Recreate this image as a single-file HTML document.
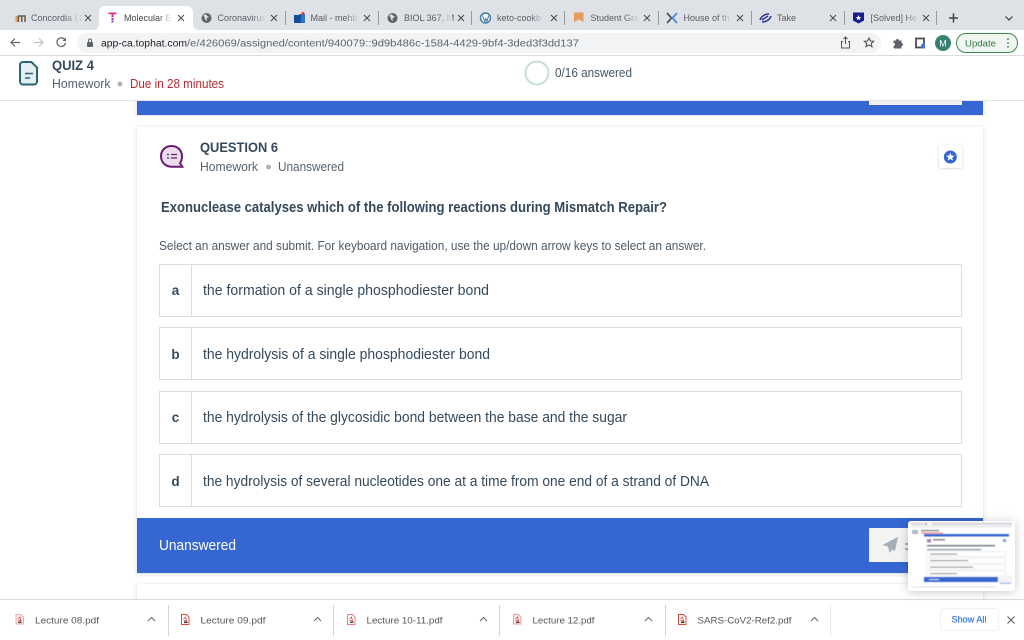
<!DOCTYPE html>
<html><head><meta charset="utf-8"><style>
html,body{margin:0;padding:0;width:1024px;height:640px;overflow:hidden;background:#fff}
svg{display:block;filter:blur(.35px)}
text{font-family:"Liberation Sans",sans-serif}
.tab{font-size:9px;fill:#5a5d63}
.t{fill:#34495b}
.x{stroke:#45484c;stroke-width:1;fill:none}
.sep{stroke:#96999d;stroke-width:1}
.dl{font-size:9.5px;fill:#555}
.ch{stroke:#666;stroke-width:1;fill:none}
.opt{fill:#fff;stroke:#d9dee3;stroke-width:1}
.pdf{fill:#fff;stroke:#e0483e;stroke-width:1}
</style></head><body>
<svg width="1024" height="640" viewBox="0 0 1024 640" xmlns="http://www.w3.org/2000/svg">
<defs>
<filter id="sh" x="-5%" y="-5%" width="110%" height="110%"><feDropShadow dx="0" dy="1" stdDeviation="2.500" flood-color="#000" flood-opacity=".16"/></filter>
<filter id="sh2" x="-20%" y="-20%" width="140%" height="140%"><feDropShadow dx="0" dy="1" stdDeviation="5" flood-color="#000" flood-opacity=".22"/></filter>
<filter id="bl" x="-2%" y="-2%" width="104%" height="104%"><feGaussianBlur stdDeviation=".6"/></filter>
<linearGradient id="fade"><stop offset="0" stop-color="#dee1e6" stop-opacity="0"/><stop offset="1" stop-color="#dee1e6"/></linearGradient>
<linearGradient id="fadew"><stop offset="0" stop-color="#fff" stop-opacity="0"/><stop offset="1" stop-color="#fff"/></linearGradient>
</defs>
<rect width="1024" height="640" fill="#fff"/>

<!-- page content -->
<rect x="137" y="95" width="846" height="20" fill="#3566d1" filter="url(#sh)"/>
<rect x="869" y="95" width="93" height="10" fill="#f1f1f1"/>

<rect x="137" y="127" width="846" height="446" fill="#fff" filter="url(#sh)"/>
<rect x="137" y="584" width="846" height="30" fill="#fff" filter="url(#sh)"/>

<!-- question icon -->
<path d="M171.500 146c-6 0-10.500 4.300-10.500 10.300s4.500 10.400 10.500 10.400h10.800l-2.300-3.500c1.400-1.800 2-4 2-6.900 0-6-4.500-10.300-10.500-10.300z" fill="#e9dfea" stroke="#6f1a72" stroke-width="2"/>
<path d="M167 154.500h2M167 158h2M171 154.500h6M171 158h6" stroke="#6f1a72" stroke-width="1.300" fill="none"/>
<text x="200" y="152" font-size="14" font-weight="700" class="t" textLength="78" lengthAdjust="spacingAndGlyphs">QUESTION 6</text>
<text x="200" y="171" font-size="12.500" fill="#56636f" textLength="58" lengthAdjust="spacingAndGlyphs">Homework</text>
<circle cx="268.500" cy="167" r="2.500" fill="#a9b4bd"/>
<text x="278" y="171" font-size="12.500" fill="#56636f" textLength="66" lengthAdjust="spacingAndGlyphs">Unanswered</text>

<!-- star button -->
<rect x="939" y="145" width="23" height="23" rx="1" fill="#fff" filter="url(#sh)"/>
<circle cx="950.300" cy="157" r="6.500" fill="#3566d1"/>
<path d="M950.300 152.800l1.200 2.800 3 .2-2.300 1.900.8 2.900-2.700-1.600-2.600 1.600.7-2.900-2.300-1.900 3-.2z" fill="#fff"/>

<text x="161" y="212" font-size="14.500" font-weight="700" class="t" textLength="506" lengthAdjust="spacingAndGlyphs">Exonuclease catalyses which of the following reactions during Mismatch Repair?</text>
<text x="159" y="250" font-size="12.500" fill="#4d5a66" textLength="547" lengthAdjust="spacingAndGlyphs">Select an answer and submit. For keyboard navigation, use the up/down arrow keys to select an answer.</text>

<!-- options -->
<rect class="opt" x="159.500" y="264.500" width="802" height="52"/><line x1="191.500" y1="265" x2="191.500" y2="316" stroke="#d9dee3"/>
<text x="175.500" y="295" font-size="13.500" font-weight="700" fill="#34495b" text-anchor="middle">a</text>
<text x="203" y="295" font-size="14.500" class="t" textLength="286" lengthAdjust="spacingAndGlyphs">the formation of a single phosphodiester bond</text>

<rect class="opt" x="159.500" y="327.500" width="802" height="52"/><line x1="191.500" y1="328" x2="191.500" y2="379" stroke="#d9dee3"/>
<text x="175.500" y="359" font-size="13.500" font-weight="700" fill="#34495b" text-anchor="middle">b</text>
<text x="203" y="359" font-size="14.500" class="t" textLength="287" lengthAdjust="spacingAndGlyphs">the hydrolysis of a single phosphodiester bond</text>

<rect class="opt" x="159.500" y="391.500" width="802" height="52"/><line x1="191.500" y1="392" x2="191.500" y2="443" stroke="#d9dee3"/>
<text x="175.500" y="422" font-size="13.500" font-weight="700" fill="#34495b" text-anchor="middle">c</text>
<text x="203" y="422" font-size="14.500" class="t" textLength="424" lengthAdjust="spacingAndGlyphs">the hydrolysis of the glycosidic bond between the base and the sugar</text>

<rect class="opt" x="159.500" y="454.500" width="802" height="52"/><line x1="191.500" y1="455" x2="191.500" y2="506" stroke="#d9dee3"/>
<text x="175.500" y="486" font-size="13.500" font-weight="700" fill="#34495b" text-anchor="middle">d</text>
<text x="203" y="486" font-size="14.500" class="t" textLength="506" lengthAdjust="spacingAndGlyphs">the hydrolysis of several nucleotides one at a time from one end of a strand of DNA</text>

<!-- footer -->
<rect x="137" y="518" width="846" height="55" fill="#3566d1"/>
<text x="159" y="550" font-size="14.500" fill="#fff" textLength="77" lengthAdjust="spacingAndGlyphs">Unanswered</text>
<rect x="869" y="528" width="60" height="34" rx="1" fill="#f3f3f3"/>
<path d="M898 537l-15.500 8 5.500 1.500 1.500 6.500 2.500-3.500 3 1.500z" fill="#a4adb4"/>
<rect x="905.500" y="543" width="2.500" height="2" fill="#9aa3aa"/><rect x="905.500" y="548" width="2.500" height="2" fill="#9aa3aa"/>

<!-- header -->
<rect x="0" y="56" width="1024" height="44" fill="#fff"/>
<line x1="0" y1="100.500" x2="1024" y2="100.500" stroke="#e4e4e4"/>
<path d="M23 62h8.500l5.500 5.500v14a3 3 0 0 1-3 3h-11a3 3 0 0 1-3-3v-16.500a3 3 0 0 1 3-3z" fill="#e3eef0" stroke="#2d6473" stroke-width="2"/>
<path d="M25 73.500h8M25 78h5" stroke="#2d6473" stroke-width="1.600" fill="none"/>
<text x="52" y="70" font-size="14" font-weight="700" class="t" textLength="42" lengthAdjust="spacingAndGlyphs">QUIZ 4</text>
<text x="52" y="88" font-size="13" fill="#56636f" textLength="58.500" lengthAdjust="spacingAndGlyphs">Homework</text>
<circle cx="120" cy="84" r="2.500" fill="#a9b4bd"/>
<text x="130" y="88" font-size="13" fill="#c0282d" textLength="94" lengthAdjust="spacingAndGlyphs">Due in 28 minutes</text>
<circle cx="537" cy="73" r="11.500" fill="#fff" stroke="#c4e1d5" stroke-width="2"/>
<text x="555" y="77" font-size="12.500" fill="#445566" textLength="77" lengthAdjust="spacingAndGlyphs">0/16 answered</text>

<!-- tab strip -->
<rect x="0" y="0" width="1024" height="30" fill="#dee1e6"/>
<path d="M93 30c3 0 6-2 6-6v-12c0-3.500 2.500-6 6-6h82c3.500 0 6 2.500 6 6v12c0 4 3 6 6 6z" fill="#fff"/>
<!-- concordia -->
<path d="M15.500 16h3v6h-3z" fill="#ec9a57"/><path d="M18.500 22v-6h6.500v6M21.800 22v-6" stroke="#6b5a48" stroke-width="1.500" fill="none"/>
<text x="31" y="21" class="tab">Concordia C</text><rect x="64" y="10" width="16" height="16" fill="url(#fade)"/>
<path class="x" d="M85 15l6 6M91 15l-6 6"/>
<!-- molecular -->
<path d="M108.500 12.500h8v1.800h-3v3h-2v-3h-3z" fill="#d63384"/><rect x="111.500" y="18" width="2" height="2" fill="#8a3fd1"/><rect x="111.500" y="20.500" width="2" height="2" fill="#8a3fd1"/>
<text x="124" y="21" class="tab" style="fill:#444">Molecular B</text><rect x="158" y="10" width="14" height="16" fill="url(#fadew)"/>
<path class="x" d="M178 15l6 6M184 15l-6 6"/>
<!-- coronavirus -->
<circle cx="206.500" cy="18" r="5" fill="#5f6368"/><path d="M203 15.500l3-1.500 1 2 2 .5-2.500 2 .5 2.500-2-1.500-.5-2.500z" fill="#dee1e6"/>
<text x="217.500" y="21" class="tab">Coronavirus</text><rect x="252" y="10" width="14" height="16" fill="url(#fade)"/>
<path class="x" d="M271 15l6 6M277 15l-6 6"/>
<line class="sep" x1="285.500" y1="11" x2="285.500" y2="25"/>
<!-- mail -->
<rect x="299" y="14" width="6" height="9" fill="#2a78c9"/><rect x="294" y="15" width="7" height="8" fill="#124f99"/><circle cx="303" cy="13.500" r="1.500" fill="#d33"/>
<text x="310.500" y="21" class="tab">Mail - mehb</text><rect x="345" y="10" width="14" height="16" fill="url(#fade)"/>
<path class="x" d="M364 15l6 6M370 15l-6 6"/>
<line class="sep" x1="378.500" y1="11" x2="378.500" y2="25"/>
<circle cx="392.500" cy="18" r="5" fill="#5f6368"/><path d="M389 15.500l3-1.500 1 2 2 .5-2.500 2 .5 2.500-2-1.500-.5-2.500z" fill="#dee1e6"/>
<text x="404" y="21" class="tab">BIOL 367, M</text><rect x="438" y="10" width="14" height="16" fill="url(#fade)"/>
<path class="x" d="M458 15l6 6M464 15l-6 6"/>
<line class="sep" x1="471.500" y1="11" x2="471.500" y2="25"/>
<!-- wp -->
<circle cx="485.500" cy="18" r="5" fill="#fff" stroke="#3f7ca0" stroke-width="1.400"/><path d="M482.500 15.500l2.300 6 1-3 1 3 2-6" stroke="#3f7ca0" fill="none"/>
<text x="497" y="21" class="tab">keto-cookb</text><rect x="530" y="10" width="14" height="16" fill="url(#fade)"/>
<path class="x" d="M551 15l6 6M557 15l-6 6"/>
<line class="sep" x1="564.500" y1="11" x2="564.500" y2="25"/>
<path d="M574 12.500h9.500v9.500l-4.700-2.500-4.800 2.500z" fill="#e89b5d"/>
<text x="590.500" y="21" class="tab">Student Gra</text><rect x="625" y="10" width="14" height="16" fill="url(#fade)"/>
<path class="x" d="M644 15l6 6M650 15l-6 6"/>
<line class="sep" x1="658.500" y1="11" x2="658.500" y2="25"/>
<path d="M667 13l4.500 5-4.500 5" fill="none" stroke="#555" stroke-width="1.800"/><path d="M677 13l-4.500 5 4.500 5" fill="none" stroke="#4a89dc" stroke-width="1.800"/>
<text x="683.500" y="21" class="tab">House of th</text><rect x="718" y="10" width="14" height="16" fill="url(#fade)"/>
<path class="x" d="M737 15l6 6M743 15l-6 6"/>
<line class="sep" x1="751.500" y1="11" x2="751.500" y2="25"/>
<path d="M760 20c1-3 4-6 9-6M771 16c-1 3-4 6-9 6M762 20l6-4" fill="none" stroke="#2c3c8e" stroke-width="1.500"/>
<text x="777" y="21" class="tab">Take</text>
<path class="x" d="M830 15l6 6M836 15l-6 6"/>
<line class="sep" x1="844.500" y1="11" x2="844.500" y2="25"/>
<path d="M853 12.500h11v8l-5.500 3-5.500-3z" fill="#141e8c"/><path d="M858.500 15l.8 2h2l-1.600 1.300.6 2-1.800-1.200-1.800 1.200.6-2-1.600-1.300h2z" fill="#fff"/>
<text x="870.500" y="21" class="tab">[Solved] He</text><rect x="905" y="10" width="14" height="16" fill="url(#fade)"/>
<path class="x" d="M923 15l6 6M929 15l-6 6"/>
<line class="sep" x1="936.500" y1="11" x2="936.500" y2="25"/>
<path d="M953.500 13.500v9M949 18h9" stroke="#3c4043" stroke-width="1.500" fill="none"/>
<path d="M1005.500 16.500l3.500 3.500 3.500-3.500" stroke="#3c4043" stroke-width="1.200" fill="none"/>

<!-- toolbar -->
<rect x="0" y="30" width="1024" height="25" fill="#fff"/>
<line x1="0" y1="55.500" x2="1024" y2="55.500" stroke="#dadce0"/>
<path d="M20 42.500h-8.500M15 38.500l-4 4 4 4" stroke="#5f6368" stroke-width="1.200" fill="none"/>
<path d="M34 42.500h8.500M39 38.500l4 4-4 4" stroke="#bcc0c4" stroke-width="1.200" fill="none"/>
<path d="M65 40a4.300 4.300 0 1 0 .5 3" stroke="#5f6368" stroke-width="1.200" fill="none"/><path d="M66 37.500v3.500h-3.500z" fill="#5f6368"/>
<rect x="77" y="33" width="804" height="20" rx="10" fill="#f1f3f4"/>
<rect x="87" y="42" width="6" height="5" rx="1" fill="#5f6368"/><path d="M88.500 42v-1.500a1.500 1.500 0 0 1 3 0V42" stroke="#5f6368" fill="none"/>
<text x="101" y="46.500" font-size="10" fill="#202124" textLength="86" lengthAdjust="spacingAndGlyphs">app-ca.tophat.com</text>
<text x="187" y="46.500" font-size="10" fill="#5f6368" textLength="392" lengthAdjust="spacingAndGlyphs">/e/426069/assigned/content/940079::9d9b486c-1584-4429-9bf4-3ded3f3dd137</text>
<path d="M843 41.500h-1.500v6.500h8v-6.500H848M845.500 44v-7M843.500 39l2-2 2 2" stroke="#555" fill="none"/>
<path d="M869 38l1.400 3 3.300.3-2.500 2.200.8 3.200-3-1.700-3 1.700.8-3.200-2.500-2.200 3.300-.3z" fill="none" stroke="#555" stroke-width="1.100"/>
<path d="M893.500 40.500h2.500a1.500 1.500 0 0 1 3 0h2.500v2.500a1.500 1.500 0 0 1 0 3v2.500h-7l-1-1v-1.500a1.500 1.500 0 0 0 0-3z" fill="#5f6368"/>
<rect x="916" y="38.500" width="8" height="9" fill="#fff" stroke="#4a4d52" stroke-width="1.800"/><circle cx="923" cy="46" r="2.200" fill="#3b78e7"/>
<circle cx="943" cy="43" r="8" fill="#38806f"/><text x="943" y="46.500" font-size="9" fill="#fff" text-anchor="middle">M</text>
<rect x="956.500" y="33.500" width="61" height="19" rx="9.500" fill="#f0f7f1" stroke="#3d8a4f"/>
<text x="965" y="46.500" font-size="9.500" fill="#2f7a42" textLength="31" lengthAdjust="spacingAndGlyphs">Update</text>
<path d="M1008 38.500v1.500M1008 42.300v1.500M1008 46v1.500" stroke="#2f7a42" stroke-width="1.500"/>

<!-- download bar -->
<rect x="0" y="600" width="1024" height="40" fill="#fff"/>
<line x1="0" y1="599.500" x2="1024" y2="599.500" stroke="#dcdcdc"/>
<path class="pdf" d="M16 614.500h5l2.500 2.500v7h-7.500z" stroke-opacity=".45" style="fill:#fbeeee"/><path d="M18 619l2-2 1 4-3-1" stroke="#e0483e" stroke-width=".8" fill="none"/><rect x="18" y="621.500" width="3.500" height="1.600" fill="#555"/>
<text class="dl" x="35" y="623.500" textLength="64" lengthAdjust="spacingAndGlyphs">Lecture 08.pdf</text>
<path class="ch" d="M148 621l3.500-3.500 3.500 3.500"/>
<line x1="168.500" y1="605" x2="168.500" y2="636" stroke="#d4d4d4"/>
<path class="pdf" d="M181.500 614.500h5l2.500 2.500v7.500h-7.500z"/><path d="M183.500 619l2-2 1 4-3-1" stroke="#e0483e" stroke-width=".8" fill="none"/><rect x="184" y="621.500" width="3.500" height="1.600" fill="#333"/>
<text class="dl" x="200.500" y="623.500" textLength="65" lengthAdjust="spacingAndGlyphs">Lecture 09.pdf</text>
<path class="ch" d="M314 621l3.500-3.500 3.500 3.500"/>
<line x1="333.500" y1="605" x2="333.500" y2="636" stroke="#d4d4d4"/>
<path class="pdf" d="M347.500 614.500h5l2.500 2.500v7.500h-7.500z" stroke-opacity=".7"/><path d="M349.500 619l2-2 1 4-3-1" stroke="#e0483e" stroke-width=".8" fill="none"/><rect x="350" y="621.500" width="3.500" height="1.600" fill="#555"/>
<text class="dl" x="366.500" y="623.500" textLength="76" lengthAdjust="spacingAndGlyphs">Lecture 10-11.pdf</text>
<path class="ch" d="M480 621l3.500-3.500 3.500 3.500"/>
<line x1="499.500" y1="605" x2="499.500" y2="636" stroke="#d4d4d4"/>
<path class="pdf" d="M513.500 614.500h5l2.500 2.500v7h-7.500z" stroke-opacity=".5" style="fill:#fbeeee"/><path d="M515.500 619l2-2 1 4-3-1" stroke="#e0483e" stroke-width=".8" fill="none"/><rect x="516" y="621.500" width="3.500" height="1.600" fill="#555"/>
<text class="dl" x="532.500" y="623.500" textLength="62" lengthAdjust="spacingAndGlyphs">Lecture 12.pdf</text>
<path class="ch" d="M645 621l3.500-3.500 3.500 3.500"/>
<line x1="665.500" y1="605" x2="665.500" y2="636" stroke="#d4d4d4"/>
<path class="pdf" d="M678.500 614.500h5l2.500 2.500v7.500h-7.500z"/><path d="M680.500 619l2-2 1 4-3-1" stroke="#e0483e" stroke-width=".8" fill="none"/><rect x="681" y="621.500" width="3.500" height="1.600" fill="#333"/>
<text class="dl" x="697.500" y="623.500" textLength="94" lengthAdjust="spacingAndGlyphs">SARS-CoV2-Ref2.pdf</text>
<path class="ch" d="M811 621l3.500-3.500 3.500 3.500"/>
<line x1="830.500" y1="605" x2="830.500" y2="636" stroke="#e8e8e8"/>
<rect x="940.500" y="608.500" width="58" height="22" rx="3" fill="#fff" stroke="#f0f1f3"/>
<text x="951.500" y="622.500" font-size="9" fill="#3b78e7" textLength="35" lengthAdjust="spacingAndGlyphs" stroke="#3b78e7" stroke-width=".2">Show All</text>
<path d="M1007.500 616.500l7 7M1014.500 616.500l-7 7" stroke="#666" stroke-width="1.200" fill="none"/>

<!-- thumbnail -->
<g filter="url(#sh2)"><rect x="908" y="521" width="107" height="70" rx="3" fill="#fff"/></g>
<g filter="url(#bl)">
<rect x="911" y="522.500" width="101" height="2.500" fill="#d5d8de"/>
<rect x="924" y="523" width="8" height="2" fill="#fff"/><rect x="925" y="523.300" width="2" height="1.500" fill="#a050c8"/>
<rect x="911" y="525.500" width="101" height="2" fill="#e9ebee"/>
<rect x="912" y="530" width="6" height="4" fill="#a9bcc2"/><rect x="921" y="530" width="18" height="1.200" fill="#777"/><rect x="921" y="532.500" width="22" height="1.200" fill="#d88"/>
<rect x="924" y="534" width="85" height="2.500" fill="#3566d1"/>
<rect x="927" y="539" width="4" height="3.500" fill="#a884b0"/><rect x="933" y="539" width="12" height="1.500" fill="#888"/><rect x="1003" y="539" width="3" height="3" fill="#7f9fe0"/>
<rect x="927" y="545" width="68" height="1.300" fill="#5f6a74"/>
<rect x="927" y="549" width="54" height="1.300" fill="#8b949c"/>
<rect x="926.500" y="551.500" width="79" height="5" fill="#fff" stroke="#e3e3e3" stroke-width=".6"/><rect x="930" y="553.500" width="27" height="1.200" fill="#8d959c"/>
<rect x="926.500" y="558" width="79" height="5" fill="#fff" stroke="#e3e3e3" stroke-width=".6"/><rect x="930" y="560" width="38" height="1.200" fill="#8d959c"/>
<rect x="926.500" y="564.500" width="79" height="5" fill="#fff" stroke="#e3e3e3" stroke-width=".6"/><rect x="930" y="566.500" width="43" height="1.200" fill="#8d959c"/>
<rect x="926.500" y="571" width="79" height="5" fill="#fff" stroke="#e3e3e3" stroke-width=".6"/><rect x="930" y="573" width="27" height="1.200" fill="#8d959c"/>
<rect x="924" y="577" width="77" height="5" fill="#3566d1"/><rect x="929" y="579" width="10" height="1" fill="#cfdcf5"/>
<rect x="998" y="575" width="14" height="9" fill="#f4f4f4"/><rect x="1000" y="582.500" width="11" height="1.500" fill="#a9bfec"/>
<rect x="911" y="586.500" width="85" height="1" fill="#ead9d9"/>
</g>
</svg>
</body></html>
